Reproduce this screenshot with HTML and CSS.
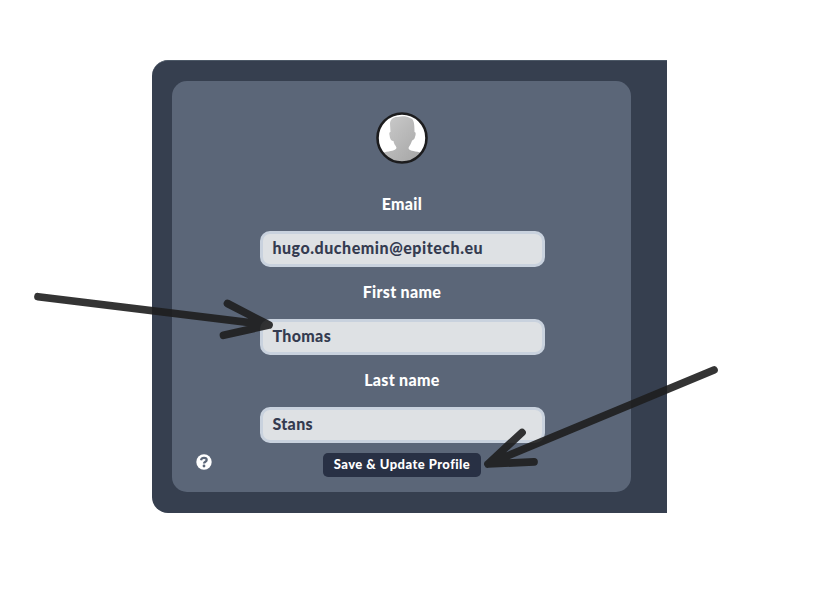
FILE: index.html
```html
<!DOCTYPE html>
<html lang="en">
<head>
<meta charset="utf-8">
<title>Profile</title>
<link rel="stylesheet" href="styles.css">
</head>
<body>
<main class="frame">
  <form class="card">
    <svg class="avatar" viewBox="0 0 52 52" aria-hidden="true">
      <defs>
        <linearGradient id="shade" x1="0" y1="0" x2="1" y2="1"><stop offset="0" stop-color="#cdcdcd"/><stop offset="1" stop-color="#a2a2a2"/></linearGradient>
        <clipPath id="circle"><circle cx="26" cy="26" r="24"/></clipPath>
      </defs>
      <circle cx="26" cy="26" r="25" fill="#fff"/>
      <path clip-path="url(#circle)" fill="url(#shade)" d="M14 12C14 7 18 4.500 22 5C26 3.500 31 4 34 6C38 7 38.500 11 38.500 20C40.500 20 39.500 24 38.500 26.500C37.500 28 36 28 35.500 30C34.500 33 33 34 32.500 36C33 39 37 38.500 44 40.500L48 44V52H4V44L8 40.500C15 38.500 19 39 20.500 36C20 33 18 33 17.500 29C15 29 14 27 13.500 23C13 21 13.500 20 14.500 20Z"/>
      <circle cx="26" cy="26" r="24.500" fill="none" stroke="#1c1c1e" stroke-width="2.600"/>
    </svg>
    <label class="label" for="email">Email</label>
    <div class="field email" id="email">hugo.duchemin@epitech.eu</div>
    <label class="label" for="first">First name</label>
    <div class="field" id="first">Thomas</div>
    <label class="label" for="last">Last name</label>
    <div class="field" id="last">Stans</div>
    <div class="actions">
      <svg class="help" viewBox="0 0 16 16" aria-hidden="true">
        <circle cx="8" cy="8" r="7.700" fill="#fff"/>
        <path d="M5 6.200C5.400 4.500 6.500 3.900 8 3.900C9.700 3.900 10.700 4.800 10.700 6C10.700 7.800 8 7.600 8 9.500" fill="none" stroke="#5b6678" stroke-width="2.200"/>
        <circle cx="8" cy="12" r="1.400" fill="#5b6678"/>
      </svg>
      <button class="save" type="button">Save &amp; Update Profile</button>
    </div>
  </form>
</main>
<svg class="arrows" viewBox="0 0 836 600" aria-hidden="true">
  <path opacity=".9" d="M38 296.700L269 325M227.500 303.500L269 325L223.500 335.300"/>
  <path opacity=".9" d="M714 370L488 464M522 432.500L488 464L534 461.800"/>
</svg>
</body>
</html>
```

FILE: styles.css
```css
* { box-sizing: border-box; }
body {
  margin: 0;
  padding: 60px 0 0 152px;
  height: 600px;
  overflow: hidden;
  background: #fff;
  font-family: Lato, "Open Sans", sans-serif;
  font-weight: 900;
  font-variant-ligatures: none;
}
.frame {
  width: 515px;
  height: 453px;
  padding: 20px 35.600px 21px 20.400px;
  background: #363f4f;
  border-top: 1px solid #4d5967;
  border-radius: 16px 0 0 16px;
}
.card {
  display: flex;
  flex-direction: column;
  align-items: center;
  height: 411px;
  padding-top: 31px;
  background: #5b6678;
  border-radius: 15px;
}
.avatar { width: 52px; height: 52px; margin-bottom: 15px; flex: none; }
.label {
  height: 52px;
  line-height: 50px;
  font-size: 16px;
  letter-spacing: .3px;
  color: #fff;
}
.field {
  width: 285px;
  height: 36px;
  margin-left: 1px;
  padding-left: 9.500px;
  line-height: 28px;
  background: #dee1e4;
  border: 3px solid #c9d2de;
  border-radius: 10px;
  font-size: 16px;
  letter-spacing: .35px;
  color: #343b50;
}
.email { letter-spacing: .53px; }
.actions {
  display: grid;
  grid-template-columns: 150.600px 158px 1fr;
  width: 100%;
  margin-top: 10px;
}
.help { width: 16px; height: 16px; margin: 1.400px 0 0 23.200px; }
.save {
  height: 24px;
  padding: 0 0 2px;
  border: 0;
  border-radius: 5px;
  background: #283044;
  color: #fff;
  font: 900 13px/22px Lato, sans-serif;
  letter-spacing: .45px;
  white-space: nowrap;
}
.arrows {
  position: absolute;
  inset: 0;
  width: 836px;
  height: 600px;
  fill: none;
  stroke: #1e1e1e;
  stroke-width: 7.700;
  stroke-linecap: round;
  stroke-linejoin: round;
}
```
